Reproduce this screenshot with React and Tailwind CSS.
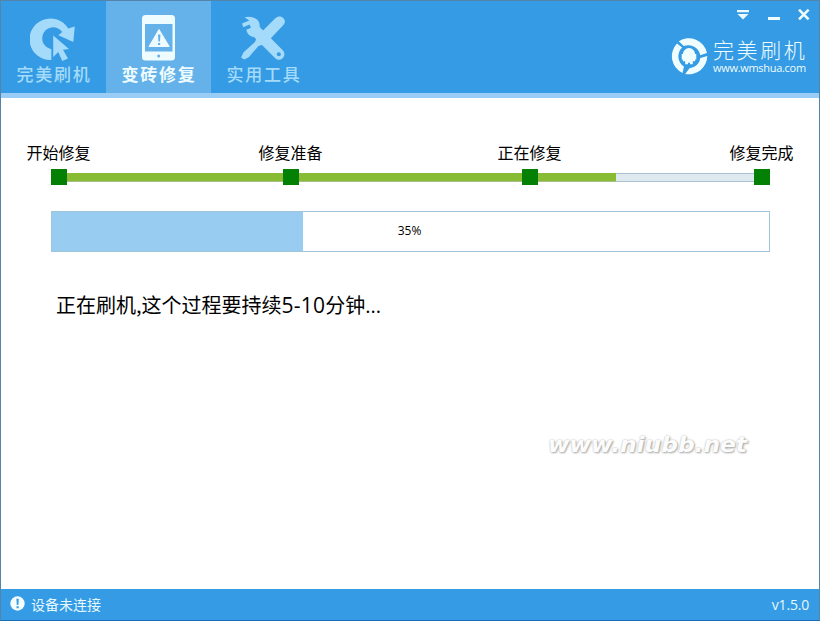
const tabs = [
    { label: "完美刷机", icon: RefreshIcon },
    { label: "变砖修复", icon: PhoneIcon, active: true },
    { label: "实用工具", icon: ToolsIcon },
];

const steps = ["开始修复", "修复准备", "正在修复", "修复完成"];

function RefreshIcon() {
    return (
        <svg width="48" height="48" viewBox="0 0 48 48" fill="currentColor">
            <path d="M21.5 46A20.8 20.8 0 1 1 38.2 14.6L44.8 12.4L43.3 28L28.4 21.2L32.2 18A11 11 0 1 0 21.5 35.2Z" />
            <path d="M23.2 21.5L39 35L33 35.8L38 44.5L32.3 47L28.2 38L23.2 43Z" stroke="#349be4" strokeWidth="3" paintOrder="stroke" />
        </svg>
    );
}

function PhoneIcon() {
    return (
        <svg width="48" height="48" viewBox="0 0 48 48">
            <rect x="7" y="1" width="33" height="45.5" rx="3.5" fill="currentColor" />
            <rect x="10" y="10" width="27.5" height="27.5" fill="#65b2ea" />
            <path d="M24 15.5L34.2 32.5H14Z" fill="currentColor" stroke="currentColor" strokeLinejoin="round" />
            <path d="M23 20.5H25.4L25 27.5H23.4ZM23 29H25.2V31H23Z" fill="#65b2ea" />
            <circle cx="23.7" cy="42" r="1.5" fill="#65b2ea" />
        </svg>
    );
}

function ToolsIcon() {
    return (
        <svg width="48" height="48" viewBox="0 0 48 48" fill="currentColor">
            <path d="M4.5 3.2C9 2 13.5 2.8 17 5.5C19.2 7.5 19.8 10 19.7 13L43 36.5A5.5 5.5 0 0 1 35.5 44.5L14 23C9.5 22.5 7.3 19.8 6.3 15.8L11 13.8L9.5 10.5L3.3 13.3L2 9.5L9.3 6.5Z" />
            <path d="M35.3 4.2C38.5 1.6 41.5 2.2 43.5 4.2C45.6 6.4 45.2 9 43.6 10.7L24.5 31L16.3 23.2Z" />
            <path d="M17 23L25 30L18.5 32L9 42.9L4.3 45.5L1.1 43.4L3.6 38.2L15 28Z" />
            <circle cx="38.8" cy="40.3" r="2" fill="#349be4" />
        </svg>
    );
}

function BrandLogo() {
    return (
        <svg width="38" height="38" viewBox="0 0 37 37" fill="#f0fdff">
            <path d="M8.5 4.2A18 18 0 0 1 36 15.7L29.4 17.8A11.8 11.8 0 0 0 13.4 8.8Z" />
            <path d="M6.8 6.3L11.8 10.3A11.8 11.8 0 0 0 13.6 28.8L12.2 35A18 18 0 0 1 6.8 6.3Z" />
            <path d="M36.3 18.5A18 18 0 0 1 14.8 36L19 30.5A11.8 11.8 0 0 0 29.6 20.4Z" />
            <path d="M12.5 17A6 6.2 0 0 1 24.5 17V23.5H22.2V26.5H19.5V25H17.5V26.5H14.8V23.5H12.5Z" />
            <path d="M11.4 16.5H13V22H11.4ZM24 16.5H25.6V22H24Z" />
        </svg>
    );
}

const WindowControls = () => (
    <div className="flex h-[28px] items-center gap-[17px] pr-[9px] text-[#eefcff]">
        <svg width="14" height="12" viewBox="0 0 14 12" fill="currentColor">
            <path d="M2 1H14V3.2H2ZM2.5 5H13.5L8 10.5Z" />
        </svg>
        <svg width="14" height="12" viewBox="0 0 14 12" fill="currentColor">
            <path d="M2 8H14V11H2Z" />
        </svg>
        <svg width="13" height="12" viewBox="0 0 13 12" fill="none">
            <path d="M2 0.7L11.6 10.3M11.6 0.7L2 10.3" stroke="currentColor" strokeWidth="2.6" />
        </svg>
    </div>
);

const Header = () => (
    <header className="flex h-[97px] shrink-0 justify-between border-b-[5px] border-[#99cdf5] bg-[#349be4]">
        <nav className="flex">
            {tabs.map(({ label, icon: Icon, active }) => (
                <button
                    key={label}
                    className={`flex w-[105px] flex-col items-center pt-[13px] ${
                        active ? "bg-[#65b2ea] text-[#effcff]" : "text-[#a5dbfa]"
                    }`}
                >
                    <Icon />
                    <span
                        className={`pl-[1px] text-[17px] leading-[24px] tracking-[1.7px] ${
                            active ? "font-bold" : "font-medium"
                        }`}
                    >
                        {label}
                    </span>
                </button>
            ))}
        </nav>

        <div className="flex flex-col items-end">
            <WindowControls />
            <div className="flex items-center gap-[5px] pt-[8px] pr-[12px] text-[#effcff]">
                <BrandLogo />
                <div className="w-[94px]">
                    <div className="h-[23px] text-[21px] font-light leading-[22px] tracking-[2.6px] whitespace-nowrap">
                        完美刷机
                    </div>
                    <div className="font-['Open_Sans','Noto_Sans_CJK_SC',sans-serif] text-[11px] leading-[13px] tracking-[-0.3px] whitespace-nowrap">
                        www.wmshua.com
                    </div>
                </div>
            </div>
        </div>
    </header>
);

const StepMarker = ({ label }) => (
    <div className="flex w-4 flex-col items-center">
        <span className="h-[28px] pr-[1px] text-[16px] leading-[22px] whitespace-nowrap">{label}</span>
        <span className="size-4 bg-[#048004]" />
    </div>
);

const Steps = () => (
    <div className="flex items-end">
        <StepMarker label={steps[0]} />
        <div className="mb-[3px] h-[9px] w-[216px] border-b border-[#a9bd88] bg-[#87bc34]" />
        <StepMarker label={steps[1]} />
        <div className="mb-[3px] h-[9px] w-[223px] border-b border-[#a9bd88] bg-[#87bc34]" />
        <StepMarker label={steps[2]} />
        <div className="mb-[3px] h-[9px] w-[78px] border-b border-[#a9bd88] bg-[#87bc34]" />
        <div className="mb-[3px] h-[9px] w-[138px] border-y border-[#a8c3cf] bg-[#dfeaf0]" />
        <StepMarker label={steps[3]} />
    </div>
);

const ProgressBar = ({ percent }) => (
    <div className="relative mt-[26px] h-[41px] w-[719px] border border-[#a0c4d8]">
        <div className="h-full bg-[#99ccf1]" style={{ width: `${percent}%` }} />
        <span className="absolute inset-0 flex items-center justify-center pr-[2px] pb-[2px] font-['Open_Sans',sans-serif] text-[12px]">
            {percent}%
        </span>
    </div>
);

const App = () => {
    return (
        <div className="flex h-[621px] w-[820px] flex-col border border-b-[#1a6cb8] border-[#5485a8] bg-white font-['Noto_Sans_CJK_SC',sans-serif] text-black">
            <Header />

            <main className="flex-1 pt-[43px] pl-[50px]">
                <Steps />
                <ProgressBar percent={35} />
                <p className="mt-[38px] ml-[5px] text-[20px] leading-[30px] whitespace-nowrap">
                    正在刷机,这个过程要持续
                    <span className="font-['Open_Sans',sans-serif] text-[21px] tracking-[0.2px]">5-10</span>
                    分钟<span className="font-['Open_Sans',sans-serif]">...</span>
                </p>
                <div className="mt-[107px] ml-[497px] font-['DejaVu_Sans',sans-serif] text-[22px] font-bold italic leading-[34px] text-[#fcfcfc] [text-shadow:1px_1px_2px_#aaa,0_0_2px_#bbb]">
                    <span className="inline-block origin-left scale-x-[1.06]">www.niubb.net</span>
                </div>
            </main>

            <footer className="flex h-[31px] items-center justify-between bg-[#349be4] pr-[10px] pl-[9px] text-[14px] text-[#e6f9ff]">
                <div className="flex items-center gap-[6px]">
                    <svg width="15" height="15" viewBox="0 0 15 15" className="mb-[2px]">
                        <circle cx="7.5" cy="7.5" r="7.2" fill="#f4fdff" />
                        <path d="M6.4 2.7H8.8L8.4 9H6.8ZM6.5 10.2H8.7V12.2H6.5Z" fill="#349be4" />
                    </svg>
                    <span>设备未连接</span>
                </div>
                <span className="font-['Open_Sans',sans-serif] tracking-[-0.2px]">v1.5.0</span>
            </footer>
        </div>
    );
};

export default App;
